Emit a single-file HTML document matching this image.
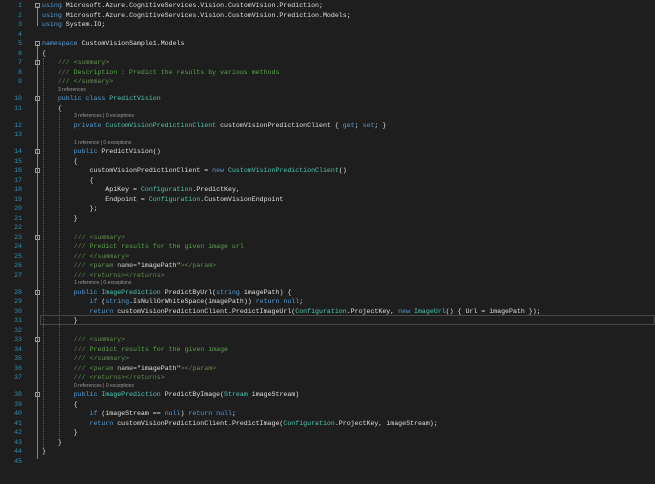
<!DOCTYPE html>
<html><head><meta charset="utf-8"><style>
html,body{margin:0;padding:0;background:#1e1e1e;width:655px;height:484px;overflow:hidden}
#ed{position:relative;padding-top:1px;font-family:"Liberation Mono",monospace;font-size:6.6px;color:#e0e0e0}
.l{height:9.5px;line-height:9.5px;white-space:pre;position:relative}
.n{position:absolute;left:0;width:22px;text-align:right;color:#2b91af}
.c{position:absolute;left:42px}
.lens{height:7.5px;line-height:7.5px;white-space:pre;font-family:"Liberation Sans",sans-serif;font-size:5px;color:#999;position:relative}
.lens span{position:absolute}
.k{color:#569cd6}.t{color:#4ec9b0}.g{color:#608b4e}.cm{color:#57a64a}
.f{position:absolute;left:35px;top:2px;width:5px;height:5px;border:0.8px solid #999;box-sizing:border-box}
.f:after{content:"";position:absolute;left:0.6px;right:0.6px;top:1.5px;height:0.7px;background:#999}
.v{position:absolute;left:37px;width:0.8px;background:#888}
.d{position:absolute;width:0;border-left:0.8px dotted #5a5a5a}
#cur{position:absolute;left:40px;right:0;top:315px;height:9.8px;border:1px solid #464646;box-sizing:border-box}
</style></head><body><div id="ed">
<div id="cur"></div>
<div class="v" style="top:6px;height:20px"></div>
<div class="v" style="top:45px;height:414px"></div>
<div class="d" style="left:43px;top:58px;height:390px"></div>
<div class="d" style="left:59px;top:113px;height:325px"></div>
<div class="l"><span class="n">1</span><span class="f"></span><span class="c"><span class="k">using</span> Microsoft.Azure.CognitiveServices.Vision.CustomVision.Prediction;</span></div>
<div class="l"><span class="n">2</span><span class="c"><span class="k">using</span> Microsoft.Azure.CognitiveServices.Vision.CustomVision.Prediction.Models;</span></div>
<div class="l"><span class="n">3</span><span class="c"><span class="k">using</span> System.IO;</span></div>
<div class="l"><span class="n">4</span></div>
<div class="l"><span class="n">5</span><span class="f"></span><span class="c"><span class="k">namespace</span> CustomVisionSample1.Models</span></div>
<div class="l"><span class="n">6</span><span class="c">{</span></div>
<div class="l"><span class="n">7</span><span class="f"></span><span class="c">    <span class="g">/// &lt;summary&gt;</span></span></div>
<div class="l"><span class="n">8</span><span class="c">    <span class="g">///</span><span class="cm"> Description : Predict the results by various methods</span></span></div>
<div class="l"><span class="n">9</span><span class="c">    <span class="g">/// &lt;/summary&gt;</span></span></div>
<div class="lens"><span style="left:58px">3 references</span></div>
<div class="l"><span class="n">10</span><span class="f"></span><span class="c">    <span class="k">public class</span> <span class="t">PredictVision</span></span></div>
<div class="l"><span class="n">11</span><span class="c">    {</span></div>
<div class="lens"><span style="left:74px">3 references | 0 exceptions</span></div>
<div class="l"><span class="n">12</span><span class="c">        <span class="k">private</span> <span class="t">CustomVisionPredictionClient</span> customVisionPredictionClient { <span class="k">get</span>; <span class="k">set</span>; }</span></div>
<div class="l"><span class="n">13</span></div>
<div class="lens"><span style="left:74px">1 reference | 0 exceptions</span></div>
<div class="l"><span class="n">14</span><span class="f"></span><span class="c">        <span class="k">public</span> PredictVision()</span></div>
<div class="l"><span class="n">15</span><span class="c">        {</span></div>
<div class="l"><span class="n">16</span><span class="f"></span><span class="c">            customVisionPredictionClient = <span class="k">new</span> <span class="t">CustomVisionPredictionClient</span>()</span></div>
<div class="l"><span class="n">17</span><span class="c">            {</span></div>
<div class="l"><span class="n">18</span><span class="c">                ApiKey = <span class="t">Configuration</span>.PredictKey,</span></div>
<div class="l"><span class="n">19</span><span class="c">                Endpoint = <span class="t">Configuration</span>.CustomVisionEndpoint</span></div>
<div class="l"><span class="n">20</span><span class="c">            };</span></div>
<div class="l"><span class="n">21</span><span class="c">        }</span></div>
<div class="l"><span class="n">22</span></div>
<div class="l"><span class="n">23</span><span class="f"></span><span class="c">        <span class="g">/// &lt;summary&gt;</span></span></div>
<div class="l"><span class="n">24</span><span class="c">        <span class="g">///</span><span class="cm"> Predict results for the given image url</span></span></div>
<div class="l"><span class="n">25</span><span class="c">        <span class="g">/// &lt;/summary&gt;</span></span></div>
<div class="l"><span class="n">26</span><span class="c">        <span class="g">/// &lt;param</span> <span style="color:#c8c8c8">name=</span>"imagePath"<span class="g">&gt;&lt;/param&gt;</span></span></div>
<div class="l"><span class="n">27</span><span class="c">        <span class="g">/// &lt;returns&gt;&lt;/returns&gt;</span></span></div>
<div class="lens"><span style="left:74px">1 reference | 0 exceptions</span></div>
<div class="l"><span class="n">28</span><span class="f"></span><span class="c">        <span class="k">public</span> <span class="t">ImagePrediction</span> PredictByUrl(<span class="k">string</span> imagePath) {</span></div>
<div class="l"><span class="n">29</span><span class="c">            <span class="k">if</span> (<span class="k">string</span>.IsNullOrWhiteSpace(imagePath)) <span class="k">return null</span>;</span></div>
<div class="l"><span class="n">30</span><span class="c">            <span class="k">return</span> customVisionPredictionClient.PredictImageUrl(<span class="t">Configuration</span>.ProjectKey, <span class="k">new</span> <span class="t">ImageUrl</span>() { Url = imagePath });</span></div>
<div class="l"><span class="n">31</span><span class="c">        }</span></div>
<div class="l"><span class="n">32</span></div>
<div class="l"><span class="n">33</span><span class="f"></span><span class="c">        <span class="g">/// &lt;summary&gt;</span></span></div>
<div class="l"><span class="n">34</span><span class="c">        <span class="g">///</span><span class="cm"> Predict results for the given image</span></span></div>
<div class="l"><span class="n">35</span><span class="c">        <span class="g">/// &lt;/summary&gt;</span></span></div>
<div class="l"><span class="n">36</span><span class="c">        <span class="g">/// &lt;param</span> <span style="color:#c8c8c8">name=</span>"imagePath"<span class="g">&gt;&lt;/param&gt;</span></span></div>
<div class="l"><span class="n">37</span><span class="c">        <span class="g">/// &lt;returns&gt;&lt;/returns&gt;</span></span></div>
<div class="lens"><span style="left:74px">0 references | 0 exceptions</span></div>
<div class="l"><span class="n">38</span><span class="f"></span><span class="c">        <span class="k">public</span> <span class="t">ImagePrediction</span> PredictByImage(<span class="t">Stream</span> imageStream)</span></div>
<div class="l"><span class="n">39</span><span class="c">        {</span></div>
<div class="l"><span class="n">40</span><span class="c">            <span class="k">if</span> (imageStream == <span class="k">null</span>) <span class="k">return null</span>;</span></div>
<div class="l"><span class="n">41</span><span class="c">            <span class="k">return</span> customVisionPredictionClient.PredictImage(<span class="t">Configuration</span>.ProjectKey, imageStream);</span></div>
<div class="l"><span class="n">42</span><span class="c">        }</span></div>
<div class="l"><span class="n">43</span><span class="c">    }</span></div>
<div class="l"><span class="n">44</span><span class="c">}</span></div>
<div class="l"><span class="n">45</span></div>
</div></body></html>
